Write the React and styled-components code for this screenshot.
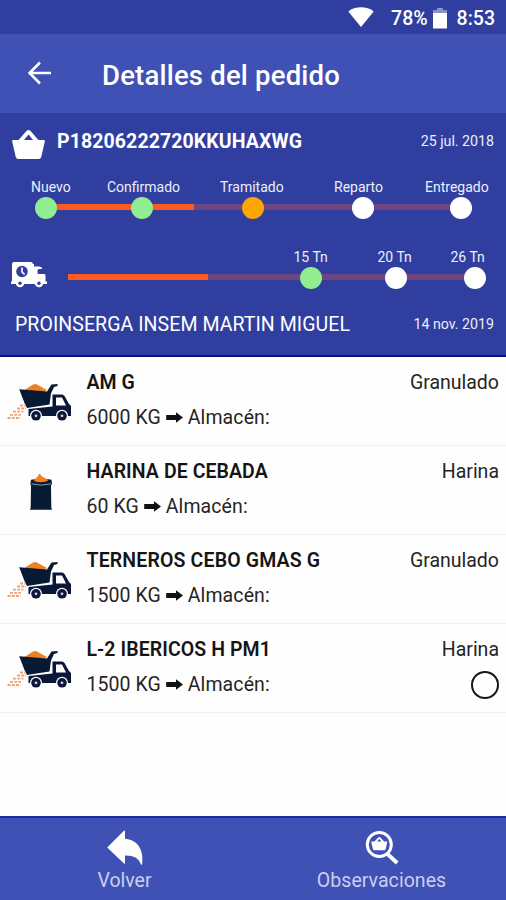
import React from "react";
import styled, { createGlobalStyle } from "styled-components";

const Global = createGlobalStyle`
  * { box-sizing: border-box; }
  body { margin: 0; background: #fff; font-family: Roboto, "Liberation Sans", sans-serif; }
  svg { display: block; flex: none; }
`;

const Screen = styled.div`
  width: 506px;
  height: 900px;
  display: flex;
  flex-direction: column;
  overflow: hidden;
  background: #fefefe;
`;

const StatusBar = styled.div`
  height: 34px;
  flex: none;
  display: flex;
  align-items: center;
  justify-content: flex-end;
  padding: 3px 11px 0 0;
  background: #303f9f;
`;

const AppBar = styled.header`
  height: 79px;
  flex: none;
  display: flex;
  align-items: center;
  padding: 4px 0 0 27px;
  gap: 50px;
  background: #3f51b5;
  svg { margin-bottom: 5px; }
`;

const Summary = styled.section`
  height: 244px;
  flex: none;
  background: #303f9f;
  border-bottom: 2px solid #08108a;
`;

const Text = styled.span`
  white-space: pre;
  line-height: 1.2;
  color: ${(p) => p.$color || "#fff"};
  font-size: ${(p) => p.$size}px;
  font-weight: ${(p) => p.$weight || 400};
  letter-spacing: ${(p) => p.$track || 0}px;
`;

const SummaryLine = styled.div`
  display: flex;
  align-items: center;
  justify-content: space-between;
  height: ${(p) => p.$height}px;
  padding: 0 12px 0 ${(p) => p.$left}px;
`;

const OrderId = styled.div`
  display: flex;
  align-items: center;
  gap: 12px;
  svg { margin-top: 4px; }
`;

const Labels = styled.div`
  display: grid;
  grid-template-columns: ${(p) => p.$cols};
  height: 21px;
  padding: 2px 0 0 ${(p) => p.$left}px;
  align-items: center;
`;

const Track = styled.div`
  display: grid;
  grid-template-columns: ${(p) => p.$cols};
  width: ${(p) => p.$width}px;
  margin-left: ${(p) => p.$left}px;
  padding-left: ${(p) => p.$inset}px;
  height: 22px;
  background:
    linear-gradient(#ff5a22, #ff5a22) ${(p) => p.$start}px 7px / ${(p) => p.$done}px 6px no-repeat,
    linear-gradient(#6f457f, #6f457f) ${(p) => p.$start}px 7px / 100% 6px no-repeat;
`;

const Dot = styled.i`
  width: 22px;
  height: 22px;
  border-radius: 50%;
  background: ${(p) => p.$color};
`;

const Progress = styled.div`
  padding-top: 5px;
  height: 75px;
`;

const Delivery = styled.div`
  display: grid;
  grid-template-columns: 68px 1fr;
  height: 50px;
  svg { margin: 15px 0 0 10px; }
`;

const List = styled.main`
  flex: 1;
`;

const Row = styled.article`
  display: grid;
  grid-template-columns: 86.5px 1fr;
  height: 89px;
  padding-bottom: 2px;
  background: linear-gradient(#f1f1f1, #f1f1f1) 0 100% / 100% 1px no-repeat;
`;

const Picture = styled.div`
  padding: 23px 0 0 6px;
`;

const RowBody = styled.div`
  display: flex;
  flex-direction: column;
  padding: 10px 7px 0 0;
`;

const RowLine = styled.div`
  display: flex;
  align-items: center;
  justify-content: space-between;
  height: ${(p) => p.$height}px;
`;

const Quantity = styled.div`
  display: flex;
  align-items: center;
  gap: 5px;
`;

const Radio = styled.i`
  width: 28px;
  height: 28px;
  border: 2.5px solid #151515;
  border-radius: 50%;
`;

const Footer = styled.footer`
  height: 84px;
  flex: none;
  display: grid;
  grid-template-columns: 249px 1fr;
  background: #3f51b5;
  border-top: 2px solid #1c2ba0;
`;

const Action = styled.button`
  display: flex;
  flex-direction: column;
  align-items: center;
  gap: 1.5px;
  border: 0;
  padding: 11px 0 0 ${(p) => p.$shift || 0}px;
  background: none;
  font-family: inherit;
`;

const BackIcon = () => (
  <svg width="25" height="24" viewBox="0 0 25 24" fill="none" stroke="#fff" strokeWidth="2.5">
    <path d="M24 12H2.5M13 1.5L2.5 12L13 22.5" />
  </svg>
);

const WifiIcon = () => (
  <svg width="26" height="20" viewBox="0 0 26 20">
    <path d="M13 20L0.3 4.4C7-1.2 19-1.2 25.7 4.4Z" fill="#fff" />
  </svg>
);

const BatteryIcon = () => (
  <svg width="14" height="21" viewBox="0 0 14 21">
    <path d="M4 0H10V2H14V5H0V2H4Z" fill="#8991c8" />
    <path d="M0 5H14V20.5H0Z" fill="#fff" />
  </svg>
);

const basketShape = "M1 10H6.6L14.2 1.2Q16.5-1 18.8 1.2L26.4 10H32Q33 10 32.8 11.5L29.4 26.5Q28.9 29 26.4 29H6.6Q4.1 29 3.6 26.5L0.2 11.5Q0 10 1 10ZM12 10H21L16.5 4.5Z";

const BasketIcon = () => (
  <svg width="33" height="29" viewBox="0 0 33 29">
    <path d={basketShape} fill="#fff" fillRule="evenodd" />
  </svg>
);

const VanIcon = () => (
  <svg width="37" height="27" viewBox="0 0 37 27">
    <path d="M4 1H20.5Q23 1 23 4V5.5H29.5Q32 5.5 32.3 8H29Q27.5 8 27.5 9.5V12Q27.5 13 29 13H34.5Q35.5 13 35.5 15V20.5H37V23H1V20.5H2V3Q2 1 4 1Z" fill="#fff" />
    <path d="M20 3H24V12H20Z" fill="#fff" />
    <circle cx="10" cy="22" r="4.3" fill="#fff" />
    <circle cx="29" cy="22" r="4.3" fill="#fff" />
    <circle cx="10" cy="22.2" r="1.7" fill="#303f9f" />
    <circle cx="29" cy="22.2" r="1.7" fill="#303f9f" />
    <circle cx="12" cy="10.5" r="5.8" fill="#303f9f" />
    <path d="M12 6.5V11L14.6 13.5" stroke="#fff" strokeWidth="1.7" fill="none" />
  </svg>
);

const TruckIcon = () => (
  <svg width="67" height="43" viewBox="0 0 67 43">
    <path d="M17 11L27 4.5L30 4L41 10L35 14Z" fill="#ef8122" />
    <path d="M13.2 9.3L41 11.5L45.5 4.6L51.5 4V6L48 7L45 13.5L43.5 24.5L21 28L18.5 23Z" fill="#071a33" />
    <path d="M22.5 29L46.5 26.5V14.5H56Q57.5 14.5 58.5 16L63 24L65 26V36H22.5Z" fill="#0b1738" />
    <path d="M50 17.5H56L60 25.5H50Z" fill="#fff" />
    <circle cx="30" cy="35.8" r="6" fill="#fefefe" />
    <circle cx="56" cy="35.8" r="6" fill="#fefefe" />
    <circle cx="30" cy="35.8" r="4.8" fill="#0b1738" />
    <circle cx="56" cy="35.8" r="4.8" fill="#0b1738" />
    <circle cx="30" cy="35.8" r="1.4" fill="#cdd2dc" />
    <circle cx="56" cy="35.8" r="1.4" fill="#cdd2dc" />
    <g fill="none" stroke="#f2a477" strokeWidth="1.8" strokeDasharray="3 1.2">
      <path d="M14 25.5H19.5" />
      <path d="M11 28.5H20" />
      <path d="M7 31.7H17.5" />
      <path d="M4 34.8H15" />
      <path d="M1.5 38H14.5" />
    </g>
  </svg>
);

const SackIcon = () => (
  <svg width="67" height="43" viewBox="0 -2.5 67 43">
    <path d="M25.5 9.5L31 6L33.5 2L36 5L38 6L44 9.5L40 12H29Z" fill="#ef8122" />
    <path d="M25 8.2L28.5 7.8L28 9.3Q34 12.4 42 9.3L41 7.5L45.5 8.2L46 12.5L45 14L45.3 36L46 38.3H24L24.7 36L25 14L24.3 12.5Z" fill="#071a33" />
    <path d="M25.5 12.3Q35 15 45 12.3" stroke="#9da9b6" strokeWidth=".9" fill="none" />
  </svg>
);

const ArrowIcon = () => (
  <svg width="17" height="11" viewBox="0 0 17 11">
    <path d="M0.2 3H10V0.3L17 5.5L10 10.7V8H0.2Z" fill="#111" />
  </svg>
);

const ReplyIcon = () => (
  <svg width="38" height="38" viewBox="0 0 38 38">
    <path d="M1.2 18.4L18 1.8Q19 1 19 2.5V9.8C30 10.5 38 19 36.2 34.5Q35.8 37.2 34.8 35C32.5 29 27.5 26.3 19 26.5V34Q19 35.2 18 34.4Z" fill="#fff" />
  </svg>
);

const SearchBasketIcon = () => (
  <svg width="34" height="38" viewBox="0 0 34 38">
    <circle cx="14.3" cy="15.5" r="12" fill="none" stroke="#fff" strokeWidth="3" />
    <path d="M22.5 25L32.2 34" stroke="#fff" strokeWidth="3.8" />
    <path d={basketShape} fill="#fff" fillRule="evenodd" transform="translate(6.2 8) scale(.49 .46)" />
  </svg>
);

const steps = [
  ["Nuevo", "#90ee90"],
  ["Confirmado", "#90ee90"],
  ["Tramitado", "#ffa500"],
  ["Reparto", "#fff"],
  ["Entregado", "#fff"],
];

const loads = [
  ["15 Tn", "#90ee90"],
  ["20 Tn", "#fff"],
  ["26 Tn", "#fff"],
];

const items = [
  { name: "AM G", kind: "Granulado", amount: "6000 KG", Icon: TruckIcon, track: 0 },
  { name: "HARINA DE CEBADA", kind: "Harina", amount: "60 KG", Icon: SackIcon, track: 0.08 },
  { name: "TERNEROS CEBO GMAS G", kind: "Granulado", amount: "1500 KG", Icon: TruckIcon, track: 0.15 },
  { name: "L-2 IBERICOS H PM1", kind: "Harina", amount: "1500 KG", Icon: TruckIcon, track: 0.08, radio: true },
];

const StepLabels = ({ data, cols, left }) => (
  <Labels $cols={cols} $left={left}>
    {data.map(([label]) => (
      <Text key={label} $size={14} $color="#eceefa">{label}</Text>
    ))}
  </Labels>
);

const Item = ({ name, kind, amount, Icon, track, radio }) => (
  <Row>
    <Picture><Icon /></Picture>
    <RowBody>
      <RowLine $height={31}>
        <Text $size={19.5} $weight={600} $color="#151515" $track={track}>{name}</Text>
        <Text $size={19.5} $color="#252525">{kind}</Text>
      </RowLine>
      <RowLine $height={40}>
        <Quantity>
          <Text $size={19.5} $color="#252525" $track={0.05}>{amount}</Text>
          <ArrowIcon />
          <Text $size={19.5} $color="#252525" $track={0.1}>Almacén:</Text>
        </Quantity>
        {radio && <Radio />}
      </RowLine>
    </RowBody>
  </Row>
);

const WifiSlot = styled.div`
  margin: 0 17px 3px 0;
`;

const BatterySlot = styled.div`
  margin: 0 10px 0 5px;
`;

export default function App() {
  return (
    <Screen>
      <Global />
      <StatusBar>
        <WifiSlot><WifiIcon /></WifiSlot>
        <Text $size={19.5} $weight={500}>78%</Text>
        <BatterySlot><BatteryIcon /></BatterySlot>
        <Text $size={19.5} $weight={500}>8:53</Text>
      </StatusBar>
      <AppBar>
        <BackIcon />
        <Text $size={27.5} $weight={500} $track={0.2}>Detalles del pedido</Text>
      </AppBar>
      <Summary>
        <SummaryLine $height={58} $left={12}>
          <OrderId>
            <BasketIcon />
            <Text $size={19.5} $weight={700} $track={0.1}>P18206222720KKUHAXWG</Text>
          </OrderId>
          <Text $size={14.2} $color="#eceefa">25 jul. 2018</Text>
        </SummaryLine>
        <Progress>
          <StepLabels data={steps} cols="76px 113px 114px 91px 65px" left={31} />
          <Track $left={35} $width={426} $start={11} $done={148} $inset={0} $cols="96px 111px 110px 98px 22px">
            {steps.map(([label, color]) => <Dot key={label} $color={color} />)}
          </Track>
        </Progress>
        <Delivery>
          <VanIcon />
          <div>
            <StepLabels data={loads} cols="84px 73px 60px" left={225.5} />
            <Track $left={0} $width={407} $start={0} $done={140} $inset={231.5} $cols="85px 79.5px 22px">
              {loads.map(([label, color]) => <Dot key={label} $color={color} />)}
            </Track>
          </div>
        </Delivery>
        <SummaryLine $height={58} $left={15}>
          <Text $size={19.5} $track={0.07}>PROINSERGA INSEM MARTIN MIGUEL</Text>
          <Text $size={14.2} $color="#eceefa">14 nov. 2019</Text>
        </SummaryLine>
      </Summary>
      <List>
        {items.map((item) => <Item key={item.name} {...item} />)}
      </List>
      <Footer>
        <Action>
          <ReplyIcon />
          <Text $size={19.5} $color="#c9cfed">Volver</Text>
        </Action>
        <Action $shift={8}>
          <SearchBasketIcon />
          <Text $size={19.5} $track={0.05} $color="#c9cfed">Observaciones</Text>
        </Action>
      </Footer>
    </Screen>
  );
}
